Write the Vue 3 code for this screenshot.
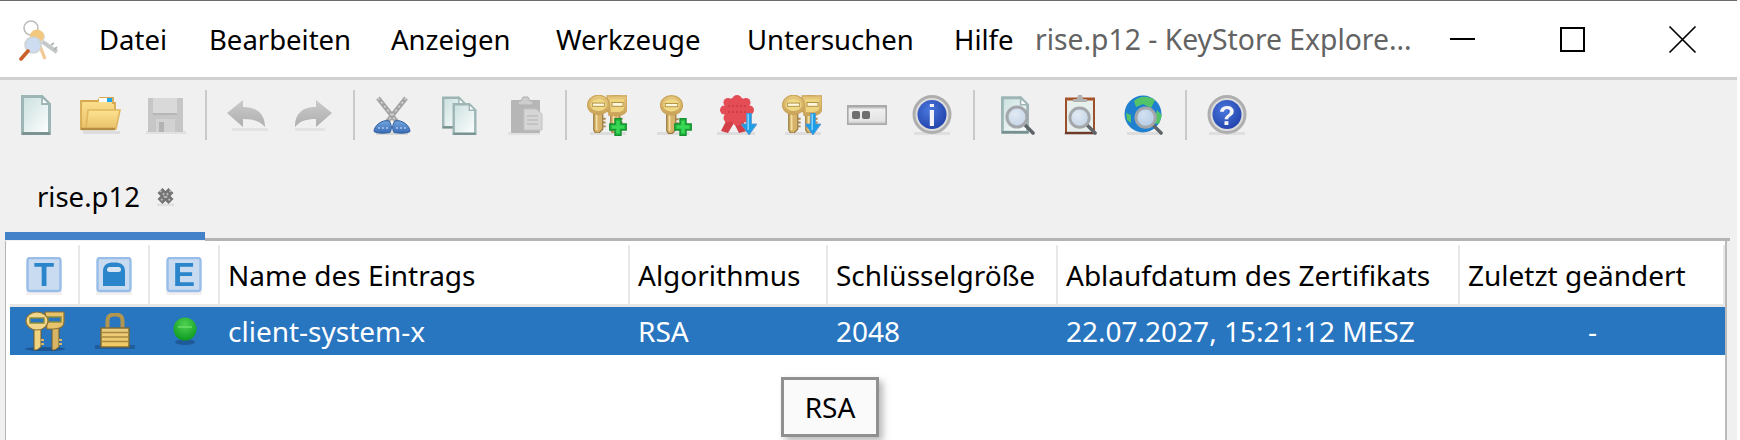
<script setup>
const menu = ['Datei', 'Bearbeiten', 'Anzeigen', 'Werkzeuge', 'Untersuchen', 'Hilfe']
const columns = ['Name des Eintrags', 'Algorithmus', 'Schlüsselgröße', 'Ablaufdatum des Zertifikats', 'Zuletzt geändert']
</script>

<template>
  <div class="window">
    <svg class="defs" width="0" height="0" aria-hidden="true">
      <defs>
        <linearGradient id="gDoc" x1="0" y1="0" x2="1" y2="1"><stop offset="0" stop-color="#c9e0de"/><stop offset="1" stop-color="#ffffff"/></linearGradient>
        <linearGradient id="gKey" x1="0" y1="0" x2="0" y2="1"><stop offset="0" stop-color="#e8c97e"/><stop offset="1" stop-color="#c8a258"/></linearGradient>
        <linearGradient id="gFold" x1="0" y1="0" x2="0" y2="1"><stop offset="0" stop-color="#fde290"/><stop offset="1" stop-color="#e9c169"/></linearGradient>
        <linearGradient id="gGray" x1="0" y1="0" x2="0" y2="1"><stop offset="0" stop-color="#cbcbcb"/><stop offset="1" stop-color="#aeaeae"/></linearGradient>
        <linearGradient id="gHandle" x1="0" y1="0" x2="0" y2="1"><stop offset="0" stop-color="#72a4e0"/><stop offset="1" stop-color="#3a6cb5"/></linearGradient>
        <linearGradient id="gPw" x1="0" y1="0" x2="0" y2="1"><stop offset="0" stop-color="#9a9a9a"/><stop offset=".2" stop-color="#efefef"/><stop offset=".8" stop-color="#e4e4e4"/><stop offset="1" stop-color="#c4c4c4"/></linearGradient>
        <radialGradient id="gBlue" cx=".4" cy=".35" r=".75"><stop offset="0" stop-color="#4a78dc"/><stop offset="1" stop-color="#1e3ea8"/></radialGradient>
        <radialGradient id="gLens" cx=".4" cy=".35" r=".8"><stop offset="0" stop-color="#e0e9f4"/><stop offset="1" stop-color="#bccde2"/></radialGradient>
        <linearGradient id="gLock" x1="0" y1="0" x2="0" y2="1"><stop offset="0" stop-color="#e8cb80"/><stop offset="1" stop-color="#f3ca63"/></linearGradient>
        <radialGradient id="gGreen" cx=".5" cy=".3" r=".7"><stop offset="0" stop-color="#4fd150"/><stop offset="1" stop-color="#0d9a22"/></radialGradient>

        <symbol id="sDoc" viewBox="0 0 30 40">
          <rect x="0" y="37" width="30" height="3" fill="#000" opacity=".1"/>
          <path d="M1.500 1.500H21L28.500 9V38.500H1.500Z" fill="url(#gDoc)" stroke="#9db6b5" stroke-width="3"/>
          <path d="M1 38.500H29" stroke="#76908f" stroke-width="2.600"/>
          <path d="M21 1.500V9H28.500Z" fill="#fff" stroke="#9db6b5" stroke-width="1.800"/>
        </symbol>

        <symbol id="sKey" viewBox="0 0 24 40">
          <path d="M7 17H16.500V36L12.500 40H9L7 37Z" fill="#d6b368" stroke="#94763f" stroke-width="1.200"/>
          <path d="M16.500 25H19.500M16.500 29H19.500M16.500 33H19.500" stroke="#a88850" stroke-width="2"/>
          <path d="M10 18V37" stroke="#f2dfa6" stroke-width="1.800"/>
          <ellipse cx="12" cy="10.500" rx="11.500" ry="10.200" fill="url(#gKey)" stroke="#c9a459" stroke-width="1.200"/>
          <ellipse cx="12" cy="10.500" rx="8.500" ry="6.400" fill="#f0d984"/>
          <rect x="5.500" y="8.500" width="13" height="3.400" fill="#fbf6dc" stroke="#ab8a3b" stroke-width=".9"/>
        </symbol>

        <symbol id="sKeys" viewBox="0 0 40 40">
          <rect x="3" y="37" width="36" height="3" fill="#000" opacity=".08"/>
          <use href="#sKey" x="17" y="0" width="23" height="38"/>
          <path d="M20 .8H40V13C40 17.500 36 20.500 30 20.500H22Z" fill="url(#gKey)" stroke="#c9a459" stroke-width="1.200"/>
          <path d="M23 4H37V13C37 15 35 17 30 17H24Z" fill="#eed47e"/>
          <rect x="25" y="7.500" width="11" height="3.800" fill="#fbf6dc" stroke="#ab8a3b" stroke-width=".9"/>
          <use href="#sKey" x="0" y="0" width="23" height="38"/>
        </symbol>

        <symbol id="sPlus" viewBox="0 0 18 18">
          <path d="M6 .8H12V6H17.200V12H12V17.200H6V12H.8V6H6Z" fill="#28c044" stroke="#149030" stroke-width="1.400"/>
          <path d="M7.500 3H10.500V7.500H15V10.500H10.500V15H7.500V10.500H3V7.500H7.500Z" fill="#3fe05a" opacity=".75"/>
        </symbol>

        <symbol id="sDown" viewBox="0 0 16 22">
          <path d="M5.500 0H10.500V11H16L8 22L0 11H5.500Z" fill="#1f9ee8" stroke="#5f93c6" stroke-width=".8"/>
          <path d="M7.200 1V17" stroke="#8bd6ff" stroke-width="1.400"/>
        </symbol>

        <symbol id="sLoupe" viewBox="0 0 30 30">
          <path d="M19 19L28 28" stroke="#5f6468" stroke-width="3.600" stroke-linecap="round"/>
          <circle cx="12" cy="12" r="10" fill="url(#gLens)" fill-opacity=".92" stroke="#a3a7ab" stroke-width="3"/>
        </symbol>
      </defs>
    </svg>

    <header class="titlebar">
      <svg class="logo" viewBox="0 0 42 42" aria-hidden="true">
        <circle cx="13" cy="9" r="7" fill="none" stroke="#bcbcbc" stroke-width="1.600"/>
        <path d="M22 21L39 33" stroke="#c5c8c9" stroke-width="4"/>
        <path d="M33 26L36 24M36 31L39 28" stroke="#b2b5b6" stroke-width="2"/>
        <circle cx="21" cy="18" r="6" fill="#d7dde2"/>
        <path d="M20 22L27 40" stroke="#f3c99a" stroke-width="3.400"/>
        <ellipse cx="19" cy="17" rx="7" ry="6.500" fill="#f2c87e"/>
        <circle cx="15" cy="26" r="8" fill="#cddcf0" stroke="#d0d3d6" stroke-width="1.600"/>
        <path d="M10 32L3 40" stroke="#c8602a" stroke-width="3.600" stroke-linecap="round"/>
      </svg>
      <nav class="menu">
        <span v-for="item in menu" :key="item" class="menu-item">{{ item }}</span>
      </nav>
      <div class="title">rise.p12 - KeyStore Explore...</div>
      <div class="controls">
        <button class="ctl" aria-label="Minimieren"><svg width="27" height="27" viewBox="0 0 27 27"><path d="M1 13H26" stroke="#000" stroke-width="2" fill="none"/></svg></button>
        <button class="ctl" aria-label="Maximieren"><svg width="27" height="27" viewBox="0 0 27 27"><rect x="2" y="2" width="23" height="23" stroke="#000" stroke-width="2" fill="none"/></svg></button>
        <button class="ctl" aria-label="Schließen"><svg width="29" height="29" viewBox="0 0 29 29"><path d="M1.500 1.500L27.500 27.500M27.500 1.500L1.500 27.500" stroke="#000" stroke-width="1.700" fill="none"/></svg></button>
      </div>
    </header>

    <div class="toolbar">
      <div class="group g1">
        <svg class="ico" viewBox="0 0 40 40"><use href="#sDoc" x="5" y="0" width="30" height="40"/></svg>
        <svg class="ico" viewBox="0 0 40 40">
          <rect x="2" y="36" width="37" height="3" fill="#000" opacity=".08"/>
          <path d="M0 6H17L19 3H32V8H34V34H0Z" fill="url(#gFold)" stroke="#d6a94f" stroke-width="1.800"/>
          <rect x="18" y="3" width="8" height="4" fill="#fff"/><rect x="26" y="3" width="5" height="4" fill="#1ea6ee"/>
          <path d="M7 15H39L35 34H5Z" fill="url(#gFold)" stroke="#e0b75f" stroke-width="1.600"/>
          <path d="M0 34H34" stroke="#b48c42" stroke-width="2.400"/>
        </svg>
        <svg class="ico" viewBox="0 0 40 40">
          <rect x="0" y="36" width="40" height="3" fill="#000" opacity=".06"/>
          <rect x="2" y="3" width="35" height="34" fill="#c6c6c6"/>
          <rect x="7" y="3" width="24" height="16" fill="#d9d9d9"/>
          <rect x="7" y="18" width="24" height="2" fill="#b6b6b6"/>
          <rect x="10" y="24" width="19" height="13" fill="#d2d2d2"/>
          <rect x="13" y="27" width="5" height="10" fill="#b3b3b3"/>
        </svg>
      </div>
      <i class="sep s1"></i>
      <div class="group">
        <svg class="ico" viewBox="0 0 40 40">
          <rect x="5" y="33" width="36" height="3" fill="#000" opacity=".05"/>
          <path d="M0 18L16 5V12C28 12 38 17 38 32C33 26 26 24 16 24V32Z" fill="url(#gGray)"/>
        </svg>
        <svg class="ico" viewBox="0 0 40 40">
          <rect x="3" y="33" width="30" height="3" fill="#000" opacity=".05"/>
          <path d="M40 18L24 5V12C12 12 3 17 3 32C8 26 14 24 24 24V32Z" fill="url(#gGray)"/>
        </svg>
      </div>
      <i class="sep s2"></i>
      <div class="group">
        <svg class="ico" viewBox="0 0 40 40">
          <rect x="4" y="37" width="32" height="3" fill="#000" opacity=".1"/>
          <path d="M6 3L25 27M34 3L15 27" stroke="#a4a4a4" stroke-width="4.600"/>
          <path d="M6 3L25 27M34 3L15 27" stroke="#dcdcdc" stroke-width="1.400" stroke-dasharray="2 3"/>
          <path d="M17 26C20 30 20 34 18 37.500C12 38.500 5 38.500 2 36.500C2 31 10 24 17 26Z" fill="url(#gHandle)" stroke="#2c5a9c" stroke-width="1"/>
          <path d="M23 26C20 30 20 34 22 37.500C28 38.500 35 38.500 38 36.500C38 31 30 24 23 26Z" fill="url(#gHandle)" stroke="#2c5a9c" stroke-width="1"/>
          <path d="M6 33H16M24 33H34" stroke="#a9c8ee" stroke-width="1.600" stroke-dasharray="2 2"/>
        </svg>
        <svg class="ico" viewBox="0 0 40 40">
          <use href="#sDoc" x="5" y="0" width="24" height="35"/>
          <use href="#sDoc" x="15" y="8" width="25" height="32"/>
        </svg>
        <svg class="ico paste" viewBox="0 0 42 40">
          <rect x="6" y="37" width="32" height="3" fill="#000" opacity=".06"/>
          <rect x="9" y="5" width="29" height="33" rx="1" fill="#b6b6b6"/>
          <path d="M16 6H19L21 2H26L28 6H31V10H16Z" fill="#cdcdcd" stroke="#b0b0b0"/>
          <path d="M22 14H34L40 19V35H22Z" fill="#d6d6d6" stroke="#c4c4c4"/>
          <path d="M25 21H36M25 25H36M25 29H36" stroke="#bdbdbd" stroke-width="1.600"/>
        </svg>
      </div>
      <i class="sep s3"></i>
      <div class="group">
        <svg class="ico" viewBox="0 0 40 40">
          <use href="#sKeys"/>
          <use href="#sPlus" x="22" y="23" width="18" height="18"/>
        </svg>
        <svg class="ico" viewBox="0 0 40 40">
          <rect x="5" y="37" width="32" height="3" fill="#000" opacity=".08"/>
          <use href="#sKey" x="8" y="0" width="23" height="39"/>
          <use href="#sPlus" x="22" y="23" width="18" height="18"/>
        </svg>
        <svg class="ico" viewBox="0 0 40 40">
          <rect x="0" y="37" width="38" height="3" fill="#000" opacity=".08"/>
          <path d="M11 22L4 36L11 38L17 28L22 38L30 36L25 22Z" fill="#d23f48"/>
          <g fill="#e44d56">
            <circle cx="20" cy="4.500" r="4.500"/><circle cx="11" cy="7.500" r="4.500"/><circle cx="29" cy="7.500" r="4.500"/>
            <circle cx="7.500" cy="15" r="4.500"/><circle cx="32.500" cy="15" r="4.500"/><circle cx="11" cy="23" r="4.500"/>
            <circle cx="29" cy="23" r="4.500"/><circle cx="20" cy="26" r="4.500"/><circle cx="20" cy="15" r="13"/>
          </g>
          <path d="M11 11H29M11 17H29" stroke="#c93a44" stroke-width="1.500" stroke-dasharray="2 2"/>
          <use href="#sDown" x="24" y="18" width="16" height="22"/>
        </svg>
        <svg class="ico" viewBox="0 0 40 40">
          <use href="#sKeys"/>
          <use href="#sDown" x="23" y="18" width="16" height="22"/>
        </svg>
        <svg class="ico" viewBox="0 0 40 40">
          <rect x=".8" y="10.800" width="38.400" height="18.400" fill="url(#gPw)" stroke="#a9a9a9" stroke-width="1.600"/>
          <rect x="5" y="16" width="8" height="8" rx="2" fill="#6e6e6e"/>
          <rect x="15" y="16" width="8" height="8" rx="2" fill="#6e6e6e"/>
        </svg>
        <svg class="ico" viewBox="0 0 40 40">
          <rect x="2" y="37" width="36" height="3" fill="#000" opacity=".07"/>
          <circle cx="20" cy="19.500" r="18" fill="#dcdcdc" stroke="#aeaeae" stroke-width="3"/>
          <circle cx="20" cy="19.500" r="14.500" fill="url(#gBlue)"/>
          <text class="glyph" x="20" y="31" font-size="30" text-anchor="middle" fill="#f4f4f8">i</text>
        </svg>
      </div>
      <i class="sep s4"></i>
      <div class="group">
        <svg class="ico" viewBox="0 0 40 40">
          <use href="#sDoc" x="7" y="0" width="28" height="40"/>
          <use href="#sLoupe" x="11" y="10" width="30" height="30"/>
        </svg>
        <svg class="ico" viewBox="0 0 40 40">
          <rect x="5" y="37" width="33" height="3" fill="#000" opacity=".08"/>
          <rect x="7" y="4" width="28" height="34" fill="#e6efec" stroke="#9c5029" stroke-width="2"/>
          <path d="M6 4H36" stroke="#a6532a" stroke-width="3"/>
          <path d="M6 38H36" stroke="#6f3b29" stroke-width="2.400"/>
          <path d="M14 7H28V4H24L23 0H19L18 4H14Z" fill="#b2b2b2"/>
          <use href="#sLoupe" x="9" y="11" width="29" height="29"/>
        </svg>
        <svg class="ico" viewBox="0 0 40 40">
          <rect x="3" y="37" width="33" height="3" fill="#000" opacity=".08"/>
          <circle cx="19" cy="19" r="18.500" fill="#1f80cf"/>
          <path d="M10 6C16 0 26 1 31 5L27 13L19 9L12 12Z M33 15L38 20L35 29L30 28Z M2 18L7 20L7 28L3 25Z" fill="#52c368"/>
          <use href="#sLoupe" x="10" y="11" width="29" height="29"/>
        </svg>
      </div>
      <i class="sep s5"></i>
      <svg class="ico" viewBox="0 0 40 40">
        <rect x="2" y="37" width="36" height="3" fill="#000" opacity=".07"/>
        <circle cx="20" cy="19.500" r="18" fill="#dcdcdc" stroke="#aeaeae" stroke-width="3"/>
        <circle cx="20" cy="19.500" r="14.500" fill="url(#gBlue)"/>
        <text class="glyph" x="20" y="30" font-size="27" text-anchor="middle" fill="#f4f4f8">?</text>
      </svg>
    </div>

    <div class="tabstrip">
      <div class="tab">
        <span class="tab-label">rise.p12</span>
        <svg class="tab-close" width="19" height="19" viewBox="0 0 19 19" aria-hidden="true">
          <rect x="1" y="16.500" width="17" height="2.500" fill="#000" opacity=".07"/>
          <path d="M4 3.500L15 14.500M15 3.500L4 14.500" stroke="#737373" stroke-width="7"/>
          <path d="M4 3.500L15 14.500M15 3.500L4 14.500" stroke="#b5b5b5" stroke-width="2" stroke-dasharray="2 2"/>
        </svg>
      </div>
      <div class="tab-rule"></div>
    </div>

    <section class="panel">
      <div class="grid head">
        <div class="hcell icon-cell">
          <svg class="hicon" viewBox="0 0 36 38"><rect x="0" y="34" width="36" height="4" fill="#000" opacity=".06"/><rect x="1.500" y="1" width="33" height="33" rx="2.500" fill="#c9dbf0" stroke="#97bde8" stroke-width="2.400"/><text class="glyph" x="18" y="29" font-size="33" text-anchor="middle" fill="#2a85ca">T</text></svg>
        </div>
        <div class="hcell icon-cell">
          <svg class="hicon" viewBox="0 0 36 38"><rect x="0" y="34" width="36" height="4" fill="#000" opacity=".06"/><rect x="1.500" y="1" width="33" height="33" rx="2.500" fill="#c9dbf0" stroke="#97bde8" stroke-width="2.400"/><path d="M7 29V14C7 8 11 5.500 18 5.500C25 5.500 29 8 29 14V29Z" fill="#2a85ca"/><rect x="11" y="10" width="14" height="5" rx="2.500" fill="#d7e5f4"/></svg>
        </div>
        <div class="hcell icon-cell">
          <svg class="hicon" viewBox="0 0 36 38"><rect x="0" y="34" width="36" height="4" fill="#000" opacity=".06"/><rect x="1.500" y="1" width="33" height="33" rx="2.500" fill="#c9dbf0" stroke="#97bde8" stroke-width="2.400"/><text class="glyph" x="18" y="29" font-size="33" text-anchor="middle" fill="#2a85ca">E</text></svg>
        </div>
        <div v-for="c in columns" :key="c" class="hcell text-cell">{{ c }}</div>
      </div>
      <div class="grid row">
        <div class="rcell icon-cell">
          <svg class="rkeys" viewBox="0 0 40 40">
            <ellipse cx="20" cy="38" rx="20" ry="2" fill="#123a66" opacity=".5"/>
            <path d="M27 14H34V36L30 39H27Z" fill="#d8b465" stroke="#6d5a2c"/>
            <path d="M9 14H16V36L12 39H9Z" fill="#efd27f" stroke="#6d5a2c"/>
            <path d="M16 29H19M16 33H19M34 29H37M34 33H37" stroke="#d8b465" stroke-width="2"/>
            <path d="M20 1H39V11C39 16 34 18 28 18H22Z" fill="#e7c36c" stroke="#8b7233" stroke-width="1.200"/>
            <rect x="23" y="6" width="13" height="5" fill="#2875c0" stroke="#8b8a3a" stroke-width="1.400"/>
            <ellipse cx="12" cy="10" rx="11" ry="9" fill="#f1d78c" stroke="#8b7233" stroke-width="1.200"/>
            <rect x="5" y="7" width="14" height="5" fill="#2875c0" stroke="#8b8a3a" stroke-width="1.400"/>
          </svg>
        </div>
        <div class="rcell icon-cell">
          <svg class="rlock" viewBox="0 0 40 36">
            <rect x="0" y="32" width="40" height="4" fill="#123a66" opacity=".4"/>
            <path d="M12.500 17V8C12.500 3 15 1.500 20 1.500C25 1.500 27.500 3 27.500 8V17" fill="none" stroke="#b0964f" stroke-width="4"/>
            <rect x="6" y="15" width="28" height="19" fill="url(#gLock)" stroke="#7d6730" stroke-width="1.400"/>
            <path d="M6 19.500H34M6 24H34M6 28.500H34" stroke="#a88a3e" stroke-width="1.400"/>
          </svg>
        </div>
        <div class="rcell icon-cell">
          <svg class="rdot" viewBox="0 0 24 28">
            <ellipse cx="12" cy="25" rx="10" ry="3" fill="#123a66" opacity=".45"/>
            <circle cx="12" cy="12" r="11.500" fill="url(#gGreen)"/>
            <path d="M5 10H19" stroke="#6fe06c" stroke-width="2" opacity=".7"/>
          </svg>
        </div>
        <div class="rcell text-cell">client-system-x</div>
        <div class="rcell text-cell">RSA</div>
        <div class="rcell text-cell">2048</div>
        <div class="rcell text-cell">22.07.2027, 15:21:12 MESZ</div>
        <div class="rcell text-cell center">-</div>
      </div>
      <div class="tooltip">RSA</div>
    </section>
  </div>
</template>

<style>
html, body { margin: 0; background: #fff; }
</style>

<style scoped>
.window {
  position: relative;
  width: 1737px;
  height: 440px;
  overflow: hidden;
  background: #f0f0f0;
  font-family: "Noto Sans", "Open Sans", sans-serif;
  font-size: 28px;
  color: #000;
}
.defs { position: absolute; }
.titlebar {
  display: flex;
  align-items: center;
  height: 76px;
  background: #fff;
  border-top: 1px solid #6b6b6b;
  border-bottom: 3px solid #d0d0d0;
}
.logo { width: 42px; height: 42px; margin: 2px 39px 0 18px; flex: none; }
.menu {
  display: grid;
  grid-template-columns: 110px 182px 165px 191px 207px 81px;
  flex: none;
  font-size: 27.500px;
}
.menu-item { white-space: nowrap; }
.title { width: 372px; color: #636363; white-space: nowrap; flex: none; font-size: 28.300px; }
.controls { display: flex; }
.ctl {
  display: flex;
  align-items: center;
  justify-content: center;
  width: 110px;
  height: 76px;
  padding: 0;
  border: 0;
  background: none;
}
.toolbar {
  display: flex;
  align-items: center;
  height: 70px;
  padding-left: 16px;
}
.group { display: flex; gap: 25px; }
.ico { display: block; width: 40px; height: 40px; flex: none; filter: blur(.35px); overflow: visible; }
.paste { width: 42px; margin-right: -2px; }
.sep { display: block; width: 2px; height: 50px; background: #c9c9c9; flex: none; }
.s1 { margin: 0 20px 0 19px; }
.s2 { margin: 0 17px 0 21px; }
.s3 { margin: 0 20px 0 23px; }
.s4 { margin: 0 19px 0 21px; }
.s5 { margin: 0 20px 0 21px; }
.glyph { font-family: "Liberation Sans", sans-serif; font-weight: 700; }
.tabstrip {
  display: flex;
  align-items: flex-end;
  height: 91px;
  padding-left: 5px;
  margin-right: 7px;
}
.tab {
  display: flex;
  align-items: center;
  box-sizing: border-box;
  width: 200px;
  height: 91px;
  padding: 0 0 0 32px;
  border-bottom: 8px solid #4382c9;
  margin-bottom: 1px;
}
.tab-label { width: 119px; margin-top: 12px; white-space: nowrap; font-size: 27.500px; }
.tab-close { margin-top: 12px; flex: none; filter: blur(.35px); }
.tab-rule { flex: 1; height: 3px; background: #b4b4b4; }
.panel {
  position: relative;
  height: 199px;
  margin: 0 10px 0 5px;
  padding: 4px 0 0 4px;
  background: #fff;
  border-left: 1px solid #b4b4b4;
  border-right: 2px solid #bbb;
}
.grid {
  display: grid;
  grid-template-columns: 70px 70px 70px 410px 198px 230px 402px 265px;
}
.head { height: 62px; }
.hcell {
  display: flex;
  align-items: center;
  box-sizing: border-box;
  border-right: 2px solid #e8e8e8;
  border-bottom: 3px solid #e6e6e6;
}
.row { height: 48px; background: #2875c0; color: #fff; }
.rcell { display: flex; align-items: center; }
.text-cell { padding-left: 8px; white-space: nowrap; }
.icon-cell { justify-content: center; }
.center { justify-content: center; padding-left: 0; }
.hicon { width: 36px; height: 38px; filter: blur(.3px); margin-top: 3px; }
.rkeys { width: 40px; height: 40px; filter: blur(.3px); }
.rlock { width: 40px; height: 36px; filter: blur(.3px); }
.rdot { width: 24px; height: 28px; filter: blur(.3px); }
.tooltip {
  position: absolute;
  left: 775px;
  top: 136px;
  box-sizing: border-box;
  display: flex;
  align-items: center;
  justify-content: center;
  width: 98px;
  height: 60px;
  background: #fafafa;
  border: 3px solid #909090;
  box-shadow: 4px 4px 7px rgba(0, 0, 0, .28);
}
</style>
